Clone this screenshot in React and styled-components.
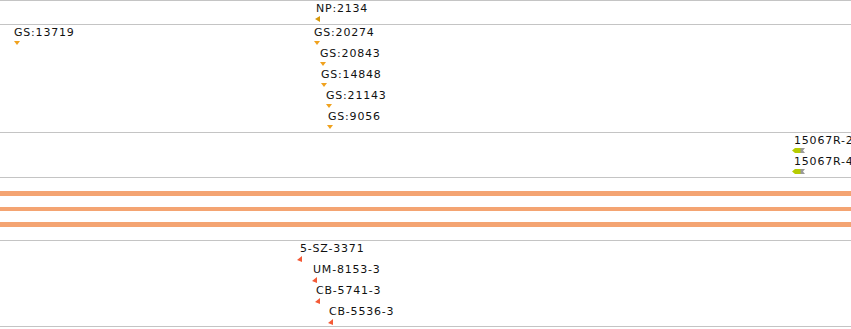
import React from "react";
import styled, { createGlobalStyle } from "styled-components";

const Global = createGlobalStyle`
  html, body { margin: 0; padding: 0; background: #ffffff; }
  body { font-family: "DejaVu Sans", "Liberation Sans", sans-serif; }
`;

const Page = styled.div`
  width: 851px;
  height: 329px;
  overflow: hidden;
  display: flex;
  flex-direction: column;
  border-top: 1px solid #c4c4c4;
  background: #fff;
`;

const Track = styled.div`
  position: relative;
  flex: 0 0 auto;
  height: ${(p) => p.$h}px;
  border-bottom: 1px solid #c4c4c4;
  overflow: hidden;
`;

const BandTrack = styled.div`
  flex: 0 0 auto;
  height: 63px;
  box-sizing: border-box;
  padding: 13px 0;
  display: flex;
  flex-direction: column;
  gap: 11px;
  border-bottom: 1px solid #c4c4c4;
`;

const Band = styled.div`
  height: 5px;
  background: #f4a472;
`;

const Feature = styled.div`
  position: absolute;
  display: flex;
  flex-direction: column;
  align-items: flex-start;
`;

const Label = styled.span`
  font-family: "DejaVu Sans", "Liberation Sans", sans-serif;
  font-size: 11px;
  line-height: 14px;
  letter-spacing: 0.8px;
  color: #111;
  white-space: nowrap;
`;

const MarkerBox = styled.span`
  display: block;
  line-height: 0;
  margin-left: ${(p) => p.$dx || 0}px;
  margin-top: ${(p) => p.$dy || 0}px;
`;

function Marker({ kind, dx, dy }) {
  let svg = null;
  if (kind === "down") {
    svg = (
      <svg width="6" height="4" viewBox="0 0 6 4">
        <polygon points="0,0 6,0 3,4" fill="#f0a21e" />
      </svg>
    );
  } else if (kind === "np") {
    svg = (
      <svg width="5" height="6" viewBox="0 0 5 6">
        <polygon points="5,0 5,6 0,3" fill="#d6980a" />
      </svg>
    );
  } else if (kind === "red") {
    svg = (
      <svg width="5" height="6" viewBox="0 0 5 6">
        <polygon points="5,0 5,6 0,4" fill="#f45a36" />
      </svg>
    );
  } else if (kind === "green") {
    svg = (
      <svg width="13" height="5" viewBox="0 0 13 5">
        <polygon points="8,0 13,0 11,2.5 13,5 8,5" fill="#9a9a9a" />
        <polygon points="0,2.5 3,0 8.5,0 8.5,5 3,5" fill="#b6cc00" />
      </svg>
    );
  }
  return (
    <MarkerBox $dx={dx} $dy={dy}>
      {svg}
    </MarkerBox>
  );
}

const ROW = 21;

const tracks = [
  {
    h: 23,
    pad: 1,
    features: [{ label: "NP:2134", x: 316, row: 0, kind: "np", dx: -1 }],
  },
  {
    h: 107,
    pad: 1,
    features: [
      { label: "GS:13719", x: 14, row: 0, kind: "down", dx: 0 },
      { label: "GS:20274", x: 314, row: 0, kind: "down", dx: 0 },
      { label: "GS:20843", x: 320, row: 1, kind: "down", dx: 0 },
      { label: "GS:14848", x: 321, row: 2, kind: "down", dx: 0 },
      { label: "GS:21143", x: 326, row: 3, kind: "down", dx: 0 },
      { label: "GS:9056", x: 328, row: 4, kind: "down", dx: -1 },
    ],
  },
  {
    h: 44,
    pad: 1,
    features: [
      { label: "15067R-2", x: 794, row: 0, kind: "green", dx: -2 },
      { label: "15067R-4", x: 794, row: 1, kind: "green", dx: -2 },
    ],
  },
];

const lower = {
  h: 85,
  pad: 1,
  features: [
    { label: "5-SZ-3371", x: 300, row: 0, kind: "red", dx: -3, dy: 0 },
    { label: "UM-8153-3", x: 313, row: 1, kind: "red", dx: -1, dy: 0 },
    { label: "CB-5741-3", x: 316, row: 2, kind: "red", dx: -1, dy: 0 },
    { label: "CB-5536-3", x: 329, row: 3, kind: "red", dx: -1, dy: 0 },
  ],
};

function FeatureTrack({ track }) {
  return (
    <Track $h={track.h}>
      {track.features.map((f) => (
        <Feature
          key={f.label + f.row}
          style={{ left: f.x, top: track.pad + f.row * ROW }}
        >
          <Label>{f.label}</Label>
          <Marker kind={f.kind} dx={f.dx} dy={f.dy} />
        </Feature>
      ))}
    </Track>
  );
}

export default function App() {
  return (
    <>
      <Global />
      <Page>
        {tracks.map((t, i) => (
          <FeatureTrack key={i} track={t} />
        ))}
        <BandTrack>
          <Band />
          <Band />
          <Band />
        </BandTrack>
        <FeatureTrack track={lower} />
      </Page>
    </>
  );
}
